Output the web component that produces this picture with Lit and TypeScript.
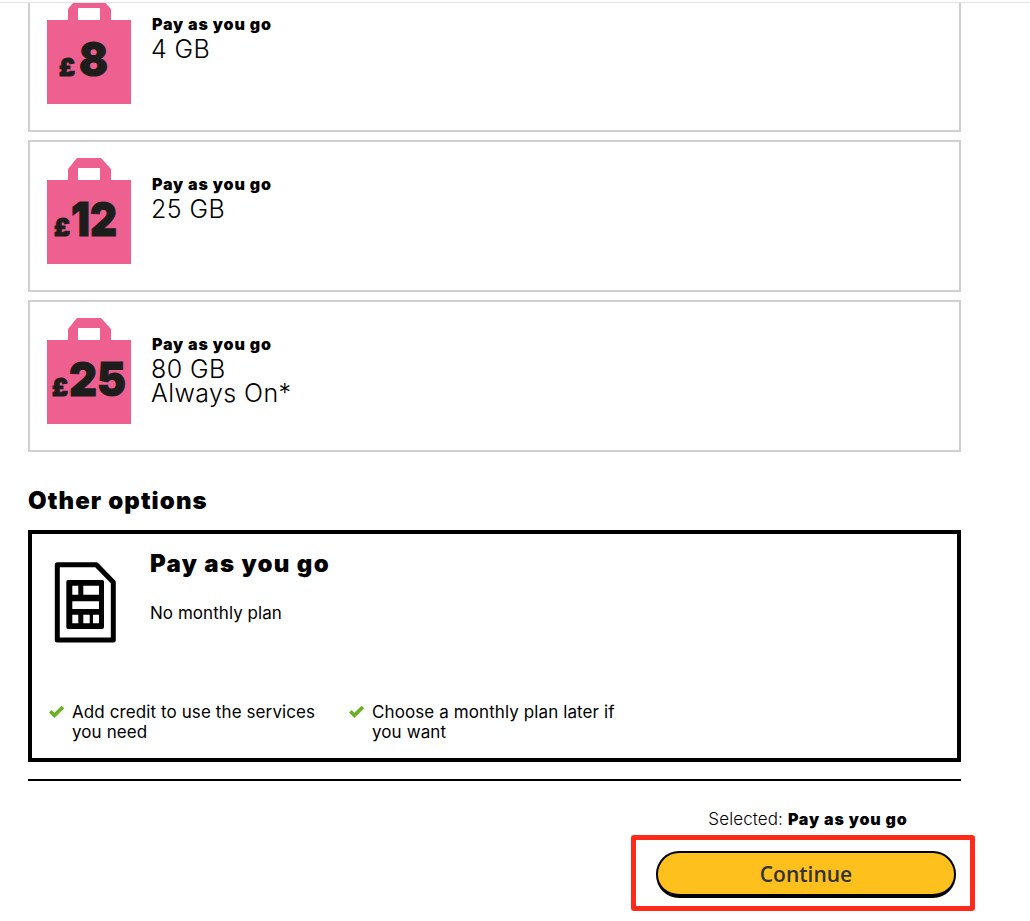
import { LitElement, html, css, svg } from "lit";
import { customElement } from "lit/decorators.js";

type Plan = { digits: string; lines: string[]; px: number; dx: number; dw: number };

const PLANS: Plan[] = [
  { digits: "8", lines: ["4 GB"], px: 12, dx: 32, dw: 29 },
  { digits: "12", lines: ["25 GB"], px: 7, dx: 24, dw: 46 },
  { digits: "25", lines: ["80 GB", "Always On*"], px: 5, dx: 22, dw: 57 },
];

@customElement("app-root")
export class AppRoot extends LitElement {
  static styles = css`
    :host {
      display: block;
      width: 1030px;
      height: 921px;
      background: #fff;
      font-family: Inter, "Liberation Sans", sans-serif;
      color: #000;
      overflow: hidden;
      position: relative;
    }
    .topbar {
      height: 2px;
      border-bottom: 1px solid #e3e3e3;
    }
    .viewport {
      height: 918px;
      overflow: hidden;
    }
    .page {
      width: 933px;
      margin: -23px 0 0 28px;
      display: flex;
      flex-direction: column;
    }
    .plans {
      display: flex;
      flex-direction: column;
      gap: 8px;
    }
    .plan {
      box-sizing: border-box;
      height: 152px;
      border: 2px solid #cfcfcf;
      padding: 16px 17px;
      display: flex;
      gap: 21px;
    }
    .bag {
      width: 84px;
      height: 106px;
      flex: none;
      display: block;
    }
    .bag text {
      font-family: Inter, "Liberation Sans", sans-serif;
      font-weight: 900;
      fill: #1d1d1b;
      stroke: #1d1d1b;
      stroke-width: 1px;
    }
    .plan-text {
      padding-top: 16px;
    }
    .plan-kind {
      font-size: 16px;
      line-height: 20px;
      font-weight: 900;
      letter-spacing: 0.85px;
      white-space: nowrap;
    }
    .plan-line {
      font-size: 25px;
      line-height: 24px;
      font-weight: 300;
      letter-spacing: 0.4px;
      white-space: nowrap;
    }
    .plan-lines {
      margin-top: 3px;
      margin-left: -1px;
    }
    h2 {
      margin: 34px 0 14px;
      font-size: 24px;
      line-height: 30px;
      font-weight: 900;
      letter-spacing: 1.1px;
    }
    .option {
      box-sizing: border-box;
      height: 232px;
      border: 4px solid #000;
      padding: 17px 16px 0 23px;
      display: flex;
      flex-direction: column;
    }
    .option-top {
      display: flex;
      gap: 33px;
    }
    .sim {
      width: 63px;
      height: 82px;
      margin-top: 10px;
      margin-left: -1px;
      flex: none;
      display: block;
    }
    .option-title {
      font-size: 24px;
      line-height: 26px;
      font-weight: 900;
      letter-spacing: 1.3px;
    }
    .option-sub {
      margin-top: 25px;
      font-size: 17px;
      line-height: 22px;
      font-weight: 400;
      letter-spacing: 0.05px;
    }
    .features {
      display: flex;
      margin: 59px 0 0 -7px;
    }
    .feature {
      width: 300px;
      display: flex;
      gap: 7px;
      font-size: 17px;
      line-height: 20px;
      font-weight: 400;
      letter-spacing: 0.1px;
    }
    .feature span {
      width: 250px;
    }
    .check {
      width: 17px;
      height: 14px;
      margin-top: 3px;
      flex: none;
      display: block;
    }
    .rule {
      height: 2px;
      background: #000;
      margin-top: 17px;
    }
    .footer {
      align-self: flex-end;
      width: 300px;
      margin: 28px 5px 0 0;
      display: flex;
      flex-direction: column;
      align-items: center;
    }
    .selected {
      font-size: 17px;
      line-height: 20px;
      font-weight: 300;
      white-space: nowrap;
      padding-left: 4px;
      letter-spacing: 0.1px;
    }
    .selected b {
      font-size: 16px;
      font-weight: 900;
      letter-spacing: 0.85px;
    }
    .continue {
      box-sizing: border-box;
      width: 300px;
      height: 47px;
      margin-top: 22px;
      border: 2px solid #000;
      border-bottom-width: 4px;
      border-radius: 23px;
      background: #fdc01c;
      color: #333;
      font-family: "Open Sans", "Noto Sans", sans-serif;
      font-size: 21px;
      font-weight: 600;
      padding: 0;
    }
    .annotation {
      position: absolute;
      left: 631px;
      top: 835px;
      width: 344px;
      height: 76px;
      box-sizing: border-box;
      border: 5px solid #ff2a1a;
      border-radius: 3px;
      pointer-events: none;
    }
  `;

  private bag(p: Plan) {
    return html`<svg class="bag" viewBox="0 0 84 106" aria-hidden="true">
      <path
        fill="#ee6090"
        fill-rule="evenodd"
        d="M0 22H21V11L30 0H54L64 11V22H84V106H0ZM31 10V22H53V10Z"
      />
      ${svg`<text x=${p.px} y="78" font-size="24" textLength="16" lengthAdjust="spacingAndGlyphs">£</text>
      <text x=${p.dx} y="78" font-size="47" textLength=${p.dw} lengthAdjust="spacingAndGlyphs">${p.digits}</text>`}
    </svg>`;
  }

  private check() {
    return html`<svg class="check" viewBox="0 0 17 14" aria-hidden="true">
      <path fill="#6ab023" d="M1 7.5 3.6 5 6.4 7.7 13.6 0.8 16.2 3.3 6.4 13Z" />
    </svg>`;
  }

  render() {
    return html`
      <div class="topbar"></div>
      <div class="viewport">
        <div class="page">
          <div class="plans">
            ${PLANS.map(
              (p) => html`<div class="plan">
                ${this.bag(p)}
                <div class="plan-text">
                  <div class="plan-kind">Pay as you go</div>
                  <div class="plan-lines">
                    ${p.lines.map((l) => html`<div class="plan-line">${l}</div>`)}
                  </div>
                </div>
              </div>`
            )}
          </div>
          <h2>Other options</h2>
          <div class="option">
            <div class="option-top">
              <svg class="sim" viewBox="0 0 63 82" aria-hidden="true">
                <path
                  fill="none"
                  stroke="#000"
                  stroke-width="5"
                  stroke-linejoin="round"
                  d="M3.3 3.7H42.3L59.3 21.3V79H3.3Z"
                />
                <path
                  fill="#000"
                  fill-rule="evenodd"
                  d="M14 19H48.5Q50 19 50 21V66Q50 68 48 68H14Q12.3 68 12.3 66V21Q12.3 19 14 19ZM18.3 24.7V33.7H24.3V24.7ZM29.3 24.7V33.7H45V24.7ZM18.3 40.3V48H45V40.3ZM18.3 53.7V62.3H24.3V53.7ZM29.3 53.7V62.3H35.7V53.7ZM39 53.7V62.3H45V53.7Z"
                />
              </svg>
              <div>
                <div class="option-title">Pay as you go</div>
                <div class="option-sub">No monthly plan</div>
              </div>
            </div>
            <div class="features">
              <div class="feature">${this.check()}<span>Add credit to use the services you need</span></div>
              <div class="feature">${this.check()}<span>Choose a monthly plan later if you want</span></div>
            </div>
          </div>
          <div class="rule"></div>
          <div class="footer">
            <div class="selected">Selected: <b>Pay as you go</b></div>
            <button class="continue">Continue</button>
          </div>
        </div>
      </div>
      <div class="annotation"></div>
    `;
  }
}
